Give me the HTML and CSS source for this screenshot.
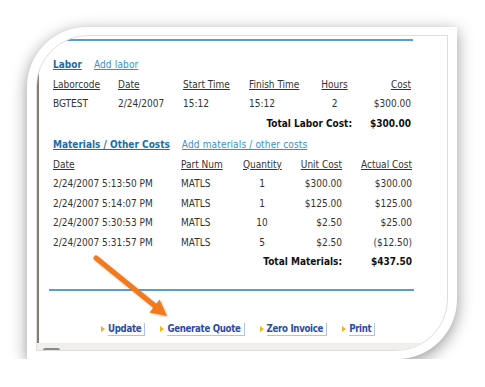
FILE: index.html
```html
<!DOCTYPE html>
<html lang="en">

<head>
      <meta charset="UTF-8">
      <meta name="viewport" content="width=device-width, initial-scale=1.0">
      <title>Invoice costs</title>
      <link rel="stylesheet" href="styles.css">
</head>

<body>
      <div class="card">
            <div class="frame">
                  <div class="sheet">
                        <div class="rule top"></div>

                        <!-- labor block -->
                        <div class="heading">
                              <a class="title" href="#">Labor</a>
                              <a class="add" href="#">Add labor</a>
                        </div>
                        <div class="row labor head">
                              <span>Laborcode</span>
                              <span>Date</span>
                              <span>Start Time</span>
                              <span>Finish Time</span>
                              <span class="mid">Hours</span>
                              <span class="num">Cost</span>
                        </div>
                        <div class="row labor">
                              <span>BGTEST</span>
                              <span>2/24/2007</span>
                              <span>15:12</span>
                              <span>15:12</span>
                              <span class="mid">2</span>
                              <span class="num">$300.00</span>
                        </div>
                        <div class="row labor total">
                              <span class="label">Total Labor Cost:</span>
                              <span class="num">$300.00</span>
                        </div>

                        <!-- materials block -->
                        <div class="heading second">
                              <a class="title" href="#">Materials / Other Costs</a>
                              <a class="add" href="#">Add materials / other costs</a>
                        </div>
                        <div class="row mats head">
                              <span>Date</span>
                              <span>Part Num</span>
                              <span class="mid">Quantity</span>
                              <span class="num">Unit Cost</span>
                              <span class="num">Actual Cost</span>
                        </div>
                        <div class="row mats">
                              <span>2/24/2007 5:13:50 PM</span>
                              <span>MATLS</span>
                              <span class="mid">1</span>
                              <span class="num">$300.00</span>
                              <span class="num">$300.00</span>
                        </div>
                        <div class="row mats">
                              <span>2/24/2007 5:14:07 PM</span>
                              <span>MATLS</span>
                              <span class="mid">1</span>
                              <span class="num">$125.00</span>
                              <span class="num">$125.00</span>
                        </div>
                        <div class="row mats">
                              <span>2/24/2007 5:30:53 PM</span>
                              <span>MATLS</span>
                              <span class="mid">10</span>
                              <span class="num">$2.50</span>
                              <span class="num">$25.00</span>
                        </div>
                        <div class="row mats">
                              <span>2/24/2007 5:31:57 PM</span>
                              <span>MATLS</span>
                              <span class="mid">5</span>
                              <span class="num">$2.50</span>
                              <span class="num">($12.50)</span>
                        </div>
                        <div class="row mats total">
                              <span class="label">Total Materials:</span>
                              <span class="num">$437.50</span>
                        </div>

                        <div class="rule bottom"></div>

                        <div class="buttons">
                              <a class="btn" href="#"><span>Update</span></a>
                              <a class="btn" href="#"><span>Generate Quote</span></a>
                              <a class="btn" href="#"><span>Zero Invoice</span></a>
                              <a class="btn" href="#"><span>Print</span></a>
                        </div>
                  </div>
                  <div class="band"><span class="nub"></span></div>
            </div>
      </div>

      <!-- call-out arrow drawn over the screenshot -->
      <svg class="arrow" width="485" height="387" viewBox="0 0 485 387">
            <line x1="96" y1="258" x2="155" y2="306" stroke="#f27a1c" stroke-width="5" stroke-linecap="round" />
            <polygon points="167,316 149.5,312.5 159.5,299.5" fill="#f27a1c" />
      </svg>
</body>

</html>
```

FILE: styles.css
```css
/* page */
body {
      margin: 0;
      padding: 27px 0 0 27px;
      background-color: #fff;
      font-family: "DejaVu Sans Condensed", "DejaVu Sans", sans-serif;
      font-size: 10px;
      color: #333;
}

/* white picture frame with the two round corners */
.card {
      box-sizing: border-box;
      width: 430px;
      height: 332px;
      padding: 8px 9px;
      background-color: #fff;
      border-radius: 60px 0 60px 0;
      box-shadow: 0 4px 16px rgba(0, 0, 0, 0.42);
}

.frame {
      box-sizing: border-box;
      height: 316px;
      border: 1px solid #dedede;
      border-radius: 52px 0 52px 0;
      overflow: hidden;
      display: flex;
      flex-direction: column;
}

/* the screenshot inside */
.sheet {
      box-sizing: border-box;
      height: 307px;
      border-left: 2px solid #8c7b6d;
      padding-left: 14px;
      padding-top: 3px;
}

.band {
      flex: 1;
      background-color: #f0efeb;
      padding-left: 6px;
      display: flex;
      align-items: flex-end;
}

.nub {
      width: 17px;
      height: 2px;
      background-color: #8a8a86;
      border-radius: 2px 2px 0 0;
}

.rule {
      height: 2px;
      background-color: #5a9fcb;
}

.rule.top {
      width: 363px;
      margin-left: -3px;
}

.rule.bottom {
      width: 365px;
      margin-left: -4px;
      margin-top: 17px;
}

/* section headings */
.heading {
      display: flex;
      gap: 12px;
      line-height: 19.5px;
      margin-top: 14px;
}

.heading.second {
      margin-top: 2px;
}

.heading a {
      text-decoration: underline;
}

.heading .title {
      font-weight: bold;
      color: #1d6da6;
}

.heading .add {
      color: #3b8fc6;
      letter-spacing: 0.15px;
}

/* table rows */
.row {
      display: grid;
      line-height: 19.5px;
      white-space: nowrap;
}

.row.labor {
      grid-template-columns: 65px 65px 66px 72px 27px 63px;
      width: 358px;
}

.row.mats {
      grid-template-columns: 128px 62px 38px 61px 70px;
      width: 359px;
}

.row.head span {
      text-decoration: underline;
}

.row .mid {
      text-align: center;
}

.row .num {
      text-align: right;
}

.row.total {
      font-weight: bold;
      color: #111;
}

.row.labor.total {
      grid-template-columns: 295px 63px;
}

.row.mats.total {
      grid-template-columns: 289px 70px;
}

.row.total .label {
      text-align: right;
}

.row.labor.total .label {
      margin-right: -4px;
}

/* action links */
.buttons {
      display: flex;
      gap: 15px;
      margin-top: 29px;
      margin-left: 48px;
      height: 19.5px;
      align-items: center;
}

.btn {
      display: flex;
      align-items: center;
      gap: 3px;
      font-size: 9.6px;
      letter-spacing: -0.3px;
      font-weight: bold;
      color: #2c4ca6;
      text-decoration: none;
}

.btn::before {
      content: "";
      border-left: 4px solid #f2b416;
      border-top: 3.5px solid transparent;
      border-bottom: 3.5px solid transparent;
      margin-bottom: 1px;
}

.btn span {
      padding-right: 3px;
      line-height: 12px;
      border-right: 1px solid #b2c2e6;
      border-bottom: 1px solid #b2c2e6;
}

.arrow {
      position: absolute;
      top: 0;
      left: 0;
      pointer-events: none;
      filter: drop-shadow(1px 1px 1px rgba(120, 60, 0, 0.35));
}
```
